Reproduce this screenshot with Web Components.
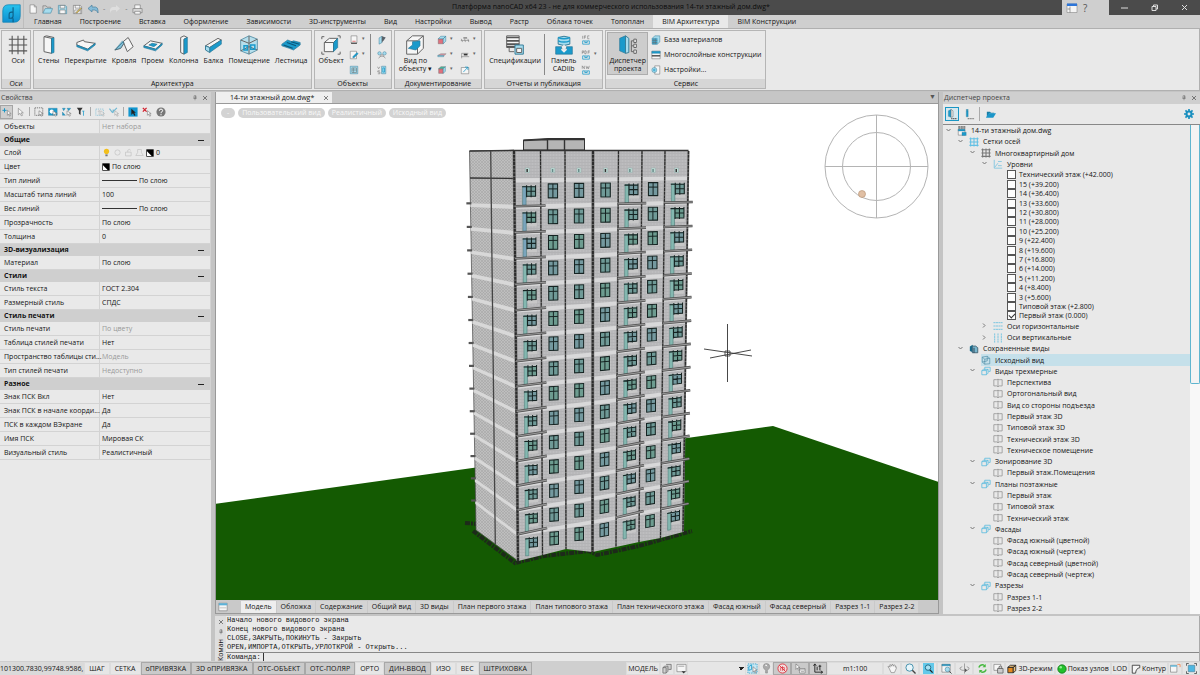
<!DOCTYPE html>
<html lang="ru">
<head>
<meta charset="utf-8">
<title>Платформа nanoCAD</title>
<style>
  html, body { margin: 0; height: 100%; overflow: hidden; }
  body {
    font: 7px/10px "Open Sans", "Noto Sans", sans-serif;
    color: #141414;
    background: #cfcfcf;
    --bar: #cfcfcf;
    --face: #e9e9e9;
    --line: #a9a9a9;
    --blue: #1a96c4;
  }
</style>
</head>
<body>
<cad-app></cad-app>

<script>
const RESET = `
  :host, * { box-sizing: border-box; }
  button, input, select { font: inherit; color: inherit; margin: 0; padding: 0; border: 0; background: none; border-radius: 0; }
  button { cursor: pointer; white-space: nowrap; }
`;

// o = outline, w = white body, b = solid blue, l = light blue, n = blue line only
const ICONS = {
  logo: `<defs><linearGradient id="g" x1="0" y1="0" x2="0" y2="1"><stop offset="0" stop-color="#28c3ee"/><stop offset="1" stop-color="#0f8fd0"/></linearGradient></defs><path d="M8 1H23V15Q23 23 15 23H1V9Q1 1 8 1Z" fill="url(#g)" stroke="#1687b5" stroke-width="1"/><path d="M14 4V15Q14 18 11 18H9V13Q9 10 14 10M14 18V23" fill="none" stroke="#0d5f86" stroke-width="1.4"/>`,
  file: `<path class="w" d="M5 2H15L20 7V22H5Z"/><path class="o" d="M15 2V7H20"/>`,
  open: `<path class="o" d="M2 20V4H9L11 7H19V10"/><path class="l" d="M2 20L7 10H23L19 20Z"/>`,
  save: `<path class="l" d="M3 3H18L21 6V21H3Z"/><path class="w" d="M7 3H17V9H7ZM6 13H18V21H6Z"/>`,
  saveas: `<path class="w" d="M3 3H18L21 6V21H3Z"/><path class="o" d="M7 3V9H17V3M6 21V13H18V21"/><path d="M8 19L19 8L21 10L11 20Z" fill="#e5c24c" stroke="#555"/>`,
  undo: `<path d="M2 11L10 4V8H17Q22 9 22 15V20Q20 14 15 14H10V18Z" fill="#86bcd8" stroke="#447c9c" stroke-width="1.3"/>`,
  redo: `<path d="M22 11L14 4V8H7Q2 9 2 15V20Q4 14 9 14H14V18Z" fill="#dedede"/>`,
  print: `<path class="w" d="M6 2H18V11H6Z"/><path d="M2 10H22V19H2Z" fill="#d9d9d9" stroke="#555"/><path class="w" d="M6 16H18V22H6Z"/>`,
  window: `<path d="M2 4H22V21H2Z" fill="#f4f4f4" stroke="#777"/><path d="M2 3H22V8H2Z" fill="#2c75d8"/><path class="o" d="M8 9V21M3 14H8"/>`,
  axes: `<path d="M5 1V23M12 1V23M19 1V23M1 5H23M1 12H23M1 19H23" fill="none" stroke="#555" stroke-width="1.3"/>`,
  wall: `<path class="w" d="M6 2L15 4V22L6 20Z"/><path class="b" d="M15 4L18 3V21L15 22Z"/><path class="o" d="M6 2L9 1L18 3"/>`,
  slab: `<path class="w" d="M1 9L9 6L10 8L23 10L14 17L1 12Z"/><path class="b" d="M1 12L14 17L23 10V12L14 19L1 14Z"/>`,
  roof: `<path class="w" d="M11 8L17 3L23 14L16 20Z"/><path class="o" d="M11 8L1 18L8 16L12 10"/><path class="b" d="M1 18L10 7L12 9L8 16Z" opacity=".5"/>`,
  opening: `<path class="w" d="M1 13L9 7L23 10L15 17Z"/><path class="b" d="M7 12L11 10L17 11L13 14ZM1 13L15 17L23 10V12L15 19L1 15Z"/>`,
  column: `<path class="w" d="M8 3L12 1L16 3L12 5V23L8 21Z"/><path class="b" d="M12 5L16 3V21L12 23Z"/>`,
  beam: `<path class="w" d="M3 13L18 4L22 6L8 15Z"/><path class="b" d="M8 15L22 6V11L8 21Z"/><path class="l" d="M3 13L8 15V21L3 18Z"/>`,
  room: `<path class="l" d="M2 6L12 1L22 5V18L12 23L2 19Z" opacity=".75"/><path class="o" d="M2 6L12 10L22 5M12 10V23M12 1V10M2 19L12 14L22 18"/><path class="n" d="M6 13H10V18H6ZM14 12H19V17H14Z"/>`,
  stairs: `<path class="b" d="M1 11L8 6L13 8L15 7L23 9V12L15 18L10 16L1 13Z"/><path d="M3 12L14 16M7 9L18 13M12 8L22 11" stroke="#0b5578" stroke-width="1.3"/>`,
  object: `<path class="w" d="M4 9L10 4H20L15 9V20H4Z"/><path class="b" d="M15 9L20 4V15L15 20Z"/><path class="o" d="M4 9H15M1 5V2H4M20 1H23V4M1 20V23H4M20 23H23V20"/>`,
  panelbox: `<path class="w" d="M5 2H19V19H5Z"/><path d="M5 20H19" stroke="#555" stroke-width="3"/><path d="M8 15H16" stroke="#e06060" stroke-width="2"/>`,
  sheetedit: `<path class="w" d="M3 3H18V21H3Z"/><path class="b" d="M10 15L19 6L22 9L13 18L9 19Z"/>`,
  sheets: `<path class="l" d="M3 3H21V21H3Z"/><path class="o" d="M7 7H18V18H7ZM11 7V18M7 12H18"/>`,
  extrude: `<path class="l" d="M5 7L12 3V18L5 22Z"/><path d="M12 3L21 6L16 13L12 17Z" fill="#58616a"/><path class="o" d="M12 3V18"/>`,
  joints: `<circle class="l" cx="6" cy="8" r="4"/><circle class="l" cx="18" cy="8" r="4"/><path class="o" d="M4 20L12 10L20 20M7 15H17"/>`,
  vs: `<path class="l" d="M11 3H21V21H11Z"/><path class="n" d="M14 7H18V17H14Z"/><path class="o" d="M1 4L4 9L7 4M7 14H2V17H7V21H2"/>`,
  viewobj: `<path class="w" d="M2 7L9 1H22V16L15 23H2Z"/><path class="o" d="M2 7H15V23M15 7L22 1"/><path class="b" d="M4 16L9 12V8L18 7V13L13 18Z"/>`,
  redbox: `<path d="M3 9H15V21H3Z" fill="#e0717d" stroke="#666"/><path class="l" d="M3 9L9 3H21L15 9ZM15 9L21 3V15L15 21Z"/>`,
  redflat: `<path d="M2 13L9 9H22L16 14Z" fill="#d995a0" stroke="#777"/><path class="l" d="M2 13H16V16H2Z"/>`,
  redgreen: `<path d="M4 9H15V20H4Z" fill="#e0717d" stroke="#666"/><path d="M4 9L9 4H20L15 9Z" fill="#45b69d" stroke="#666"/><path class="l" d="M15 9L20 4V15L15 20Z"/>`,
  dim1: `<path class="o" d="M2 13H22M3 9L6 17M11 9L13 17M19 9L21 17"/><path d="M8 7H17" stroke="#777" stroke-width="3"/>`,
  dim2: `<path class="o" d="M4 20V8H20M3 16H22"/><path d="M9 11H18" stroke="#333" stroke-width="4"/>`,
  note: `<path class="w" d="M3 6H21V21H3Z"/><path class="n" d="M8 17L19 5M19 5V12M19 5H12"/>`,
  spec: `<path class="w" d="M2 1H17V15H2Z"/><path d="M2 3H17M2 7H17M2 11H17M2 14H17" stroke="#555" stroke-width="2"/><path class="l" d="M12 12H22V23H12Z"/><path class="w" d="M14 16H20V21H14Z"/><path class="o" d="M5 15V20H11"/>`,
  cadlib: `<path class="l" d="M5 3Q12 0 19 3V11Q12 14 5 11Z"/><path class="n" d="M5 3Q12 6 19 3M5 7Q12 10 19 7"/><path class="b" d="M2 14H9V17H15V14H22V23H2Z"/><path d="M12 12V20M9 17L12 20L15 17" stroke="#eee" fill="none" stroke-width="2"/>`,
  ifc: `<path class="n" d="M4 14H9V18H15V14H20V22H4ZM12 12V18"/><path class="o" d="M4 2V9M8 9V2H12M8 5H12M20 2H16V9H20"/>`,
  pdf: `<path class="n" d="M4 14H9V18H15V14H20V22H4ZM12 12V18"/><path class="o" d="M3 9V2H6V6H3M9 2H12L13 5L12 9H9ZM17 9V2H21M17 5H21"/>`,
  nw: `<path class="n" d="M4 14H9V18H15V14H20V22H4ZM12 12V18"/><path class="o" d="M3 9V2L8 9V2M12 2L14 9L16 4L18 9L20 2"/>`,
  manager: `<path class="b" d="M2 4L9 1V22L2 19Z"/><path class="l" d="M9 1L13 4V21L9 22Z"/><path class="o" d="M16 7V20H19M16 13H19M16 7H19"/><path class="w" d="M19 5H22V9H19ZM19 11H22V15H19ZM19 18H22V22H19Z"/>`,
  matbase: `<path class="l" d="M3 8L9 2H21V17L15 22H3Z"/><path class="b" d="M3 8H15V22H3Z" opacity=".7"/><path class="o" d="M7 8V22M11 8V22M3 13H15M3 18H15"/>`,
  layers: `<path class="w" d="M2 3H22V21H2Z"/><path class="b" d="M2 3H22V8H2Z"/><path d="M2 14H22" stroke="#333" stroke-width="3"/>`,
  settings: `<path class="w" d="M9 2H21V22H9Z"/><circle class="l" cx="8" cy="12" r="6"/><circle class="n" cx="8" cy="12" r="2"/>`,
  pin: `<path class="o" d="M8 3H16V13H8ZM5 13H19M12 13V21M14 3V13" style="stroke-width:2"/>`,
  close: `<path d="M4 4L20 20M20 4L4 20" stroke="#444" stroke-width="2.6" fill="none"/>`,
  cursor: `<path class="w" d="M8 3V19L12 15L15 21L18 20L15 14H20Z"/>`,
  pluscursor: `<path d="M6 3V13M1 8H11" stroke="#1a96c4" stroke-width="2.4"/><path class="w" d="M13 8V20L16 17L18 22L20 21L18 16H22Z"/>`,
  selrect: `<path d="M2 2H21V20H2Z" fill="none" stroke="#444" stroke-width="1.6" stroke-dasharray="3 2"/><path class="w" d="M12 9V20L15 17L17 22L20 21L18 16H22Z"/>`,
  selwin: `<path class="b" d="M1 3H22V20H1Z"/><circle cx="9" cy="11" r="5" fill="#fff"/><path class="w" d="M12 9V20L15 17L17 22L20 21L18 16H22Z"/>`,
  selinv: `<path class="b" d="M1 3H8L4 9ZM1 20V12L8 20ZM12 3H21L16 9Z"/><path class="w" d="M12 9V20L15 17L17 22L20 21L18 16H22Z"/>`,
  filter: `<path d="M2 2H16L11 9V19L7 16V9Z" fill="#333"/><path class="n" d="M15 10H20M18 10V21"/>`,
  selfaded: `<g opacity=".45"><path d="M2 5H20V20H2Z" fill="none" stroke="#1a96c4" stroke-width="2" stroke-dasharray="3 2"/><path class="o" d="M10 9V20M7 12L10 8L13 12"/><path class="w" d="M14 9V20L17 17L19 22L22 21L19 16H23Z"/></g>`,
  checkfaded: `<g opacity=".6"><path d="M1 4L8 13L19 2M10 6V14" fill="none" stroke="#1a96c4" stroke-width="2.6"/><path class="w" d="M14 9V20L17 17L19 22L22 21L19 16H23Z"/></g>`,
  selblue: `<path d="M1 1H23V23H1Z" fill="#1296cf"/><path d="M8 4V19L12 15L15 21L18 20L15 14H19Z" fill="#222"/>`,
  xcursor: `<path d="M2 2L11 11M11 2L2 11" stroke="#d21f2c" stroke-width="3"/><path class="w" d="M13 9V20L16 17L18 22L21 21L18 16H22Z"/>`,
  help: `<circle cx="12" cy="12" r="11" fill="#777"/><path d="M8 9Q8 5 12 5Q16 5 16 9Q16 11 12 13V15M12 17V20" stroke="#fff" stroke-width="2.4" fill="none"/>`,
  bulb: `<path d="M12 2Q19 2 19 9Q19 13 15 16H9Q5 13 5 9Q5 2 12 2Z" fill="#f2bf1c"/><path d="M9 17H15V22H9Z" fill="#777"/>`,
  sun: `<circle cx="12" cy="12" r="7" fill="none" stroke="#c4c4c4" stroke-width="2"/>`,
  lock: `<path d="M4 11H19V21H4ZM10 11V6Q14 1 18 6" fill="none" stroke="#c4c4c4" stroke-width="2"/>`,
  printer: `<path d="M7 4H17V12L22 20H2L7 12Z" fill="none" stroke="#c4c4c4" stroke-width="2"/>`,
  swatch: `<path d="M1 1H23V23H1Z" fill="#000"/><path d="M3 7V21H17Z" fill="#fff"/>`,
  projview: `<path class="b" d="M3 4L9 1V18L3 16Z"/><path class="w" d="M9 1L13 4V17L9 18Z"/><path d="M9 21H22" stroke="#666" stroke-width="3" stroke-dasharray="3 1"/>`,
  projinfo: `<path class="b" d="M5 4H9V17H5ZM5 1H9V3H5Z"/><path d="M8 21H22" stroke="#888" stroke-width="3" stroke-dasharray="3 1"/>`,
  folder: `<path d="M4 18V6H11L13 8H20V10H9Z" fill="#1a7ea5"/><path d="M8 9H24L18 19H2Z" fill="#1b96c9"/>`,
  gear: `<circle cx="12" cy="12" r="6" fill="none" stroke="#1a8fbf" stroke-width="5"/><path d="M12 0V5M12 19V24M0 12H5M19 12H24M3.500 3.500L7 7M17 17L20.500 20.500M20.500 3.500L17 7M7 17L3.500 20.500" stroke="#1a8fbf" stroke-width="4"/>`,
  dwg: `<path d="M3 2H21M3 5H21" stroke="#555" stroke-width="2.4" stroke-dasharray="5 1"/><path class="w" d="M3 8H19V22H3Z"/><path class="b" d="M3 8H19V12H3ZM12 15H22V23H12Z"/>`,
  gridblue: `<path d="M4 1V23M12 1V23M20 1V23M1 4H23M1 12H23M1 20H23" fill="none" stroke="#63c0e4" stroke-width="2.6"/>`,
  griddark: `<path d="M4 1V23M12 1V23M20 1V23M1 4H23M1 12H23M1 20H23" fill="none" stroke="#777" stroke-width="2.6"/>`,
  levels: `<path d="M3 2V22H22M4 20L12 10M12 6H21M12 16H21" fill="none" stroke="#7cc4e0" stroke-width="2"/>`,
  hlines: `<path d="M1 4H23M1 12H23M1 20H23" fill="none" stroke="#68bfe0" stroke-width="2" stroke-dasharray="5 1"/>`,
  vlines: `<path d="M4 1V23M12 1V23M20 1V23" fill="none" stroke="#68bfe0" stroke-width="2" stroke-dasharray="5 1"/>`,
  saved: `<path d="M2 6L9 2V20L2 17Z" fill="#156b8c"/><path d="M8 5H16L21 9V21H8Z" fill="#7ab7ce" stroke="#39596a" stroke-width="2"/><path d="M12 9V21" stroke="#234" stroke-width="2"/>`,
  cube: `<path d="M3 5L15 3L21 8V21L9 22L3 17ZM3 5L9 10L21 8M9 10V22M3 17L15 14V3" fill="none" stroke="#4d8ca6" stroke-width="1.6"/>`,
  group: `<path d="M9 3H22V13H18M9 3V9M2 11L6 8H17V17L13 21H2ZM2 11H13V21M13 11L17 8" fill="none" stroke="#5fbddf" stroke-width="2"/>`,
  view: `<path d="M2 4H9L12 3L15 4H22V19H15L12 21L9 19H2ZM12 3V21" fill="none" stroke="#8f8f8f" stroke-width="1.8"/>`,
  tabsheet: `<path class="w" d="M2 3H22V21H2Z"/><path d="M2 3H22V8H2Z" fill="#5bb2d8"/><path d="M4 14H20" stroke="#bbb" stroke-width="2"/>`,
  shapes: `<path d="M9 3H20V14H14M2 10L6 7H13V18L9 22H2ZM2 10H9V22" fill="#d0d0d0" stroke="#666" stroke-width="1.6"/>`,
  sheetdown: `<path class="w" d="M2 3H22V19H2Z"/><path d="M12 18H21L17 23Z" fill="#333"/><path class="o" d="M5 7H18"/>`,
  dynsel: `<path d="M2 2H22V22H2Z" fill="#c5e8f5" stroke="#1a96c4" stroke-width="1.6" stroke-dasharray="3 2"/><path class="n" d="M4 8L10 4V14L4 16Z"/><path class="w" d="M13 8V20L16 17L18 22L20 21L18 16H22Z"/>`,
  lamp: `<path d="M12 1Q19 1 19 8Q19 12 14 16V22H10V16Q5 12 5 8Q5 1 12 1Z" fill="#aaa" stroke="#777"/><path d="M9 5Q12 3 13 7" stroke="#fff" stroke-width="2" fill="none"/>`,
  noanno: `<circle cx="12" cy="12" r="10" fill="#f0dede" stroke="#e0343f" stroke-width="2"/><path d="M5 5L19 19" stroke="#e0343f" stroke-width="2"/><path d="M8 17V10H16V17M12 7V17" stroke="#e0343f" stroke-width="1.6" fill="none"/>`,
  curmenu: `<path class="w" d="M2 2V14L5 11L8 16L10 15L7 10H11Z"/><path class="w" d="M10 12H22V22H10Z"/><path class="o" d="M10 15H22M13 19H20"/>`,
  ucs: `<path d="M4 2V20H21M1 6L4 2L7 6M17 17L21 20L17 23M9 16V8M15 4V16M12 7H18" fill="none" stroke="#222" stroke-width="2"/>`,
  hand: `<path class="w" d="M5 12L2 8Q4 6 7 9L6 4Q8 2 10 7L11 3Q14 2 14 7L16 4Q19 4 18 9L20 8Q22 10 18 17L16 21H9Z"/>`,
  lens: `<circle cx="10" cy="10" r="8" fill="#e8f6fb" stroke="#3d8ca9" stroke-width="2"/><path d="M16 16L23 23" stroke="#444" stroke-width="3"/>`,
  lensblue: `<path d="M0 0H24V24H0Z" fill="#63c9ea"/><circle cx="11" cy="10" r="6" fill="#a7e2f4" stroke="#1c647f" stroke-width="2"/><path d="M15 15L21 21" stroke="#222" stroke-width="3"/>`,
  lenswin: `<path class="w" d="M2 3H20V20H2Z"/><path class="b" d="M2 3H20V6H2Z"/><circle class="l" cx="14" cy="14" r="5"/><path d="M18 18L23 23" stroke="#444" stroke-width="2"/>`,
  orbit: `<path class="o" d="M12 1V23M7 8Q1 10 2 13Q5 17 14 16M17 8Q23 10 22 13Q20 16 17 16"/><path d="M13 12L18 16L13 20Z" fill="#555"/>`,
  regen: `<path d="M4 10Q7 3 14 4L17 6M20 14Q17 21 10 20L7 18" fill="none" stroke="#45b83e" stroke-width="3"/><path d="M19 2V9H12ZM5 22V15H12Z" fill="#45b83e"/>`,
  lockwin: `<path class="w" d="M2 3H17V16H2Z"/><path d="M10 12H22V22H10ZM13 12V8Q16 5 19 8V12" fill="#ccc" stroke="#555" stroke-width="1.6"/>`,
  box3d: `<path d="M2 8H15V21H2Z" fill="#e58a20" stroke="#222" stroke-width="2"/><path d="M2 8L8 3H21L15 8ZM15 8L21 3V16L15 21Z" fill="#ecc27e" stroke="#222" stroke-width="2"/>`,
  green: `<circle cx="12" cy="12" r="10" fill="#22c12c" stroke="#127a18" stroke-width="2"/><circle cx="9" cy="8" r="3" fill="#90f090"/>`,
  contour: `<path d="M3 22V3H21V9Q12 10 11 22Z" fill="#f6f6f6" stroke="#333" stroke-width="2"/>`,
  dual: `<path class="w" d="M1 5H15V20H1Z"/><path d="M1 5H15V8H1Z" fill="#59b7dc"/><path d="M16 3H22V9" fill="none" stroke="#f08b59" stroke-width="2"/>`,
  full: `<path d="M5 5H19V19H5Z" fill="#4eb7e1" stroke="#316a82"/><path d="M1 6V1H6M18 1H23V6M1 18V23H6M18 23H23V18" fill="none" stroke="#333" stroke-width="1.6"/>`
};

class CadIcon extends HTMLElement {
  connectedCallback() {
    const root = this.attachShadow({ mode: 'open' });
    root.innerHTML = `
      <style>
        :host { display: inline-flex; flex: none; width: var(--size, 10px); height: var(--size, 10px); }
        svg { width: 100%; height: 100%; display: block; }
        .o { fill: none; stroke: #666; stroke-width: 1.2; }
        .w { fill: #f6f6f6; stroke: #666; stroke-width: 1.2; }
        .b { fill: #1a9acb; stroke: #2a7797; stroke-width: .8; }
        .l { fill: #a5dcee; stroke: #3a7f9a; stroke-width: 1.2; }
        .n { fill: none; stroke: #1a9acb; stroke-width: 1.8; }
      </style>
      <svg viewBox="0 0 24 24" aria-hidden="true">${ICONS[this.getAttribute('name')] || ''}</svg>`;
  }
}
customElements.define('cad-icon', CadIcon);

const ico = (name, size) => `<cad-icon name="${name}"${size ? ` style="--size:${size}px"` : ''}></cad-icon>`;

/* ---------- header ---------- */

class CadHeader extends HTMLElement {
  connectedCallback() {
    const tabs = ['Главная', 'Построение', 'Вставка', 'Оформление', 'Зависимости', '3D-инструменты', 'Вид', 'Настройки', 'Вывод', 'Растр', 'Облака точек', 'Топоплан', 'BIM Архитектура', 'BIM Конструкции'];
    this.attachShadow({ mode: 'open' }).innerHTML = `
      <style>${RESET}
        :host { display: grid; grid-template-columns: 24px 1fr; background: var(--bar); }
        .logo { display: flex; grid-row: span 2; padding: 4px 2px; border-right: 1px solid #bdbdbd; }
        .title { display: flex; height: 15px; }
        .quick { display: flex; align-items: center; gap: 4px; width: 136px; padding: 3px 4px 0; }
        .quick i { font-style: normal; color: #777; }
        .caption { flex: 1; background: #4b4b4b; color: #0c0c0c; text-align: center; line-height: 14px; }
        .aux { display: flex; align-items: center; gap: 5px; width: 47px; padding: 0 4px; font-size: 10px; color: #555; }
        .win { display: flex; align-items: center; justify-content: space-around; width: 91px; background: #4b4b4b; color: #ddd; }
        .win svg { width: 7px; height: 7px; display: block; fill: none; stroke: #ddd; }
        nav { display: flex; height: 13px; padding-left: 1px; }
        nav button { padding: 0 9px; line-height: 13px; }
        nav .on { background: var(--face); }
      </style>
      <div class="logo">${ico('logo', 19)}</div>
      <div class="title">
        <div class="quick">${ico('file')}${ico('open', 11)}${ico('save', 11)}${ico('saveas', 11)}${ico('undo', 12)}<i>-</i>${ico('redo', 12)}<i>-</i>${ico('print', 11)}</div>
        <div class="caption">Платформа nanoCAD x64 23 - не для коммерческого использования 14-ти этажный дом.dwg*</div>
        <div class="aux">${ico('window', 12)}<span>?</span></div>
        <div class="win">
          <button aria-label="Свернуть"><svg viewBox="0 0 7 7"><path d="M0 4H7"/></svg></button>
          <button aria-label="Восстановить"><svg viewBox="0 0 7 7"><path d="M1 2.500H5V6.500H1ZM2.500 2V1H6.500V5H5"/></svg></button>
          <button aria-label="Закрыть"><svg viewBox="0 0 7 7"><path d="M1 1L6 6M6 1L1 6"/></svg></button>
        </div>
      </div>
      <nav>${tabs.map(t => `<button class="${t === 'BIM Архитектура' ? 'on' : ''}">${t}</button>`).join('')}</nav>`;
  }
}
customElements.define('cad-header', CadHeader);

/* ---------- ribbon ---------- */

class RibbonGroup extends HTMLElement {
  connectedCallback() {
    this.attachShadow({ mode: 'open' }).innerHTML = `
      <style>${RESET}
        :host { display: flex; flex-direction: column; border: 1px solid #b5b5b5; }
        .body { flex: 1; display: flex; align-items: flex-start; padding: 1px 1px 0; }
        .name { background: #d6d6d6; text-align: center; line-height: 9px; white-space: nowrap; }
      </style>
      <div class="body"><slot></slot></div>
      <div class="name">${this.getAttribute('name')}</div>`;
  }
}
customElements.define('ribbon-group', RibbonGroup);

class RibbonButton extends HTMLElement {
  connectedCallback() {
    this.attachShadow({ mode: 'open' }).innerHTML = `
      <style>${RESET}
        :host { display: block; text-align: center; }
        button { display: flex; flex-direction: column; align-items: center; gap: 2px; padding: 3px 2px 0 3px; line-height: 8px; height: 43px; }
        :host([pressed]) button { background: #cdcdcd; border: 1px solid #adadad; padding: 2px 1px 0; }
        :host([small]) button { flex-direction: row; gap: 3px; height: 15px; padding: 0 3px; }
      </style>
      <button>${ico(this.getAttribute('icon'), this.hasAttribute('small') ? 10 : 20)}<span><slot></slot></span></button>`;
  }
}
customElements.define('ribbon-button', RibbonButton);

class CadRibbon extends HTMLElement {
  connectedCallback() {
    const big = (i, t, x = '') => `<ribbon-button icon="${i}" ${x}>${t}</ribbon-button>`;
    const col = (...a) => `<div class="col">${a.map(i => `<button aria-label="${i}">${ico(i)}</button>`).join('')}</div>`;
    const drops = (...a) => `<div class="drops">${a.map(i => `<span>${i ? '▾' : ''}</span>`).join('')}</div>`;
    this.attachShadow({ mode: 'open' }).innerHTML = `
      <style>${RESET}
        :host { display: flex; gap: 2px; height: 63px; padding: 1px 1px; background: var(--face); border: 1px solid #b0b0b0; border-left: 0; }
        .col, .drops { display: flex; flex-direction: column; }
        .col button { display: flex; align-items: center; height: 15px; padding: 0 3px; }
        .drops { width: 7px; color: #666; font-size: 5px; }
        .drops span { height: 15px; line-height: 13px; }
        .sep { align-self: stretch; width: 1px; margin: 2px 3px 4px 1px; background: #888; }
        .text { display: flex; flex-direction: column; }
        .pad { padding: 0 2px; }
      </style>
      <ribbon-group name="Оси" style="width:30px"><div class="pad">${big('axes', 'Оси')}</div></ribbon-group>
      <ribbon-group name="Архитектура">
        ${big('wall', 'Стены')}${big('slab', 'Перекрытие')}${big('roof', 'Кровля')}${big('opening', 'Проем')}${big('column', 'Колонна')}${big('beam', 'Балка')}${big('room', 'Помещение')}${big('stairs', 'Лестница')}
      </ribbon-group>
      <ribbon-group name="Объекты">
        ${big('object', 'Объект')}${col('panelbox', 'sheetedit', 'sheets')}${drops(1, 1, 0)}<div class="sep"></div>${col('extrude', 'joints', 'vs')}
      </ribbon-group>
      <ribbon-group name="Документирование">
        ${big('viewobj', 'Вид по<br>объекту ▾')}${col('redbox', 'redflat', 'redgreen')}${drops(1, 1, 1)}${col('dim1', 'dim2', 'note')}${drops(1, 1, 0)}
      </ribbon-group>
      <ribbon-group name="Отчеты и публикация">
        ${big('spec', 'Спецификации')}<div class="sep"></div>${big('cadlib', 'Панель<br>CADlib')}${col('ifc', 'pdf', 'nw')}${drops(0, 1, 0)}
      </ribbon-group>
      <ribbon-group name="Сервис">
        ${big('manager', 'Диспетчер<br>проекта', 'pressed')}
        <div class="text">${big('matbase', 'База материалов', 'small')}${big('layers', 'Многослойные конструкции', 'small')}${big('settings', 'Настройки...', 'small')}</div>
      </ribbon-group>`;
  }
}
customElements.define('cad-ribbon', CadRibbon);

/* ---------- dock panel frame ---------- */

class DockPanel extends HTMLElement {
  connectedCallback() {
    this.attachShadow({ mode: 'open' }).innerHTML = `
      <style>${RESET}
        :host { display: flex; flex-direction: column; background: var(--face); min-height: 0; }
        header { display: flex; align-items: center; gap: 4px; height: 12px; padding: 0 3px 0 1px; background: var(--bar); color: #444; }
        header span { flex: 1; }
        header button { display: flex; }
      </style>
      <header><span>${this.getAttribute('name')}</span><button aria-label="Закрепить">${ico('pin', 6)}</button><button aria-label="Закрыть">${ico('close', 6)}</button></header>
      <slot></slot>`;
  }
}
customElements.define('dock-panel', DockPanel);

/* ---------- properties ---------- */

class PropertyGrid extends HTMLElement {
  connectedCallback() {
    const line = '<i></i>По слою';
    const rows = [
      ['Объекты', '<em>Нет набора</em>'],
      ['Общие'],
      ['Слой', ico('bulb', 9) + ico('sun', 9) + ico('lock', 9) + ico('printer', 9) + ico('swatch', 8) + '0'],
      ['Цвет', ico('swatch', 8) + 'По слою'],
      ['Тип линий', line],
      ['Масштаб типа линий', '100'],
      ['Вес линий', line],
      ['Прозрачность', 'По слою'],
      ['Толщина', '0'],
      ['3D-визуализация'],
      ['Материал', 'По слою'],
      ['Стили'],
      ['Стиль текста', 'ГОСТ 2.304'],
      ['Размерный стиль', 'СПДС'],
      ['Стиль печати'],
      ['Стиль печати', '<em>По цвету</em>'],
      ['Таблица стилей печати', 'Нет'],
      ['Пространство таблицы сти...', '<em>Модель</em>'],
      ['Тип стилей печати', '<em>Недоступно</em>'],
      ['Разное'],
      ['Знак ПСК Вкл', 'Нет'],
      ['Знак ПСК в начале коорди...', 'Да'],
      ['ПСК в каждом ВЭкране', 'Да'],
      ['Имя ПСК', 'Мировая СК'],
      ['Визуальный стиль', 'Реалистичный']
    ];
    const tools = ['pluscursor', 'cursor', '', 'selrect', 'selwin', 'selinv', 'filter', '', 'selfaded', 'checkfaded', '', 'selblue', 'xcursor', 'help'];
    this.attachShadow({ mode: 'open' }).innerHTML = `
      <style>${RESET}
        :host { display: block; border-right: 1px solid #d3d3d3; }
        .tools { display: flex; align-items: center; height: 16px; border-bottom: 1px solid #c8c8c8; }
        .tools button { display: flex; align-items: center; justify-content: center; width: 14px; height: 14px; }
        .tools button:first-child { background: #cfcfcf; border: 1px solid #a5a5a5; width: 13px; }
        .tools hr { width: 1px; height: 9px; margin: 0 2px; border: 0; background: #aaa; }
        table { width: 100%; border-collapse: separate; border-spacing: 0; table-layout: fixed; }
        td, th { height: 14px; padding: 0 0 0 4px; line-height: 10px; text-align: left; font-weight: normal; white-space: nowrap; border-bottom: 1px solid #d3d3d3; }
        th[scope=row] { border-right: 1px solid #d3d3d3; }
        td { padding-left: 2px; }
        td div { display: flex; align-items: center; gap: 2px; }
        td i { width: 35px; height: 1px; background: #333; }
        tr.sec th { height: 12px; font-weight: bold; background: var(--bar); border: 0; }
        tr.sec div { display: flex; align-items: center; justify-content: space-between; padding-right: 6px; }
        tr.sec b { width: 6px; height: 1px; background: #222; }
        em { font-style: normal; color: #999; }
      </style>
      <div class="tools">${tools.map(t => t ? `<button aria-label="${t}">${ico(t)}</button>` : '<hr>').join('')}</div>
      <table>
        <colgroup><col style="width:100px"><col></colgroup>
        ${rows.map(([k, v]) => v === undefined
          ? `<tr class="sec"><th colspan="2"><div>${k}<b></b></div></th></tr>`
          : `<tr><th scope="row">${k}</th><td><div>${v}</div></td></tr>`).join('')}
      </table>`;
  }
}
customElements.define('property-grid', PropertyGrid);

/* ---------- model view ---------- */

class ModelScene extends HTMLElement {
  connectedCallback() {
    this.attachShadow({ mode: 'open' }).innerHTML = `
      <style>
        :host { display: block; min-height: 0; background: #fff; }
        svg { display: block; width: 100%; height: 100%; }
      </style>
      <svg viewBox="216 104 724 496" preserveAspectRatio="xMidYMid slice" role="img" aria-label="Модель дома">
        <defs>
          <pattern id="brick" width="3" height="3" patternUnits="userSpaceOnUse"><rect width="3" height="3" fill="#bdbdbf"/><path d="M0 .5H3M1 1V3" stroke="#a9a9ab" stroke-width=".5"/></pattern>
          <pattern id="side" width="3" height="3" patternUnits="userSpaceOnUse"><rect width="3" height="3" fill="#bebebe"/><path d="M0 0L3 3M0 3L3 0" stroke="#a3a3a3" stroke-width=".5"/></pattern>
        </defs>
        <path d="M216 504L774 426L940 482V600H216Z" fill="#145a02"/>
        ${this.building()}
        <g fill="none" stroke="#b4b4b4" stroke-width="1">
          <circle cx="877.500" cy="166.500" r="51.500"/><circle cx="877.500" cy="166.500" r="34"/>
          <path d="M877.500 115V218M826 166.500H929"/>
        </g>
        <circle cx="863" cy="194" r="3.500" fill="#e0bfa4" stroke="#b08b6c" stroke-width=".6"/>
        <path d="M728.500 324V382M705 349L753 356M711 358L752 350" stroke="#333" stroke-width=".9" fill="none"/>
        <path d="M726 351H731V356H726Z" stroke="#333" stroke-width=".8" fill="none"/>
      </svg>`;
  }

  building() {
    const top = [515, 541.5, 566, 594, 619.5, 643, 666, 689.5];
    const bot = [519, 543.5, 567, 593.5, 617, 640, 661.5, 684];
    const base = [561, 555, 549, 552, 547, 542, 538, 532];
    // floor height at position t along the front, row k counted from the top
    const fy = (t, k) => 191.5 - 3 * t + (26.4 - 2.2 * t) * k - (0.083 - 0.018 * t) * k * k;
    const ly = k => 191.5 + 23.7 * k - 0.06 * k * k;
    const fx = (c, y) => {
      const i = Math.min(6, Math.floor(c)), f = c - i, v = (y - 150) / 400;
      const a = top[i] + (bot[i] - top[i]) * v, b = top[i + 1] + (bot[i + 1] - top[i + 1]) * v;
      return a + (b - a) * f;
    };
    const F = (c, k) => { const y = fy(c / 7, k); return [fx(c, y), y]; };
    const S = (s, k) => {
      const y0 = ly(k), y1 = fy(0, k), y = y0 + (y1 - y0) * s;
      const v = (y - 150) / 400;
      return [470.5 + 6.5 * v + s * (44.5 - 2.5 * v), y];
    };
    const P = pts => 'M' + pts.map(p => p[0].toFixed(1) + ' ' + p[1].toFixed(1)).join('L');
    let out = '';

    // shadow dashes around the foundation
    out += `<path d="M466 523L480 524M474 531L516 563L545 556L590 551L598 555L640 546L693 531" fill="none" stroke="#1d2a1a" stroke-width="4" stroke-dasharray="5 1 2 1"/>`;
    // roof box and the two faces
    out += `<path d="M524.500 150V140L549 138.500H585.500V150Z" fill="#b5b5b5" stroke="#333"/><path d="M524 140.500L549 139.500H586M548.500 139V150M565.500 140V150" stroke="#333" fill="none" stroke-width="1.4"/>`;
    out += `<path d="M470.500 151L515 150L519 561L477 530Z" fill="url(#side)" stroke="#444" stroke-width=".7"/>`;
    out += `<path d="M515 150.500H689.500L684 532 L661.500 538L640 542L617 547L593.500 552L567 549L543.500 555L519 561Z" fill="url(#brick)"/>`;

    for (let k = 0; k < 15; k++) {
      const a = k - 0.5, b = k - 0.34;
      out += `<path d="${P([F(0, a), F(3.3, a), F(7, a), F(7, b), F(3, b), F(0, b)])}Z" fill="#d8d8d9"/>`;
      if (k) {
        out += `<path d="${P([S(0, a), S(1, a), S(1, b), S(0, b)])}Z" fill="#d8d8d8"/>`;
        const p = S(0, a);
        out += `<path d="M${p[0] - 4} ${p[1]}H${p[0] + 1}" stroke="#555" stroke-width="2.2"/>`;
      }
    }
    out += `<path d="M470.500 151L515 150.500H689.500M471 178L515 178.500" stroke="#333" stroke-width="1.3" fill="none"/>`;
    out += `<path d="M491.700 151L496.300 544" stroke="#444" stroke-width="1.3"/>`;

    // pilasters between the bays
    top.forEach((x, i) => {
      const w = i === 0 || i === 3 ? 3 : i === 7 ? 2 : 1.6;
      out += `<path d="M${x} 151L${bot[i]} ${base[i]}" stroke="#7a7a7a" stroke-width="${w}"/><path d="M${x} 151L${bot[i]} ${base[i]}" stroke="#2c2c2c" stroke-width="${w * 0.7}" stroke-dasharray="3 .7"/>`;
    });
    // attic vents
    for (let c = 0; c < 7; c++) {
      const x = fx(c + 0.5, 170);
      out += `<path d="M${x - 2} 168H${x + 2}V172.500H${x - 2}Z" fill="#c2ded6" stroke="#8aa" stroke-width=".4"/><path d="M${x - 1} 169H${x + .5}V172H${x - 1}Z" fill="${c % 3 ? '#688' : '#333'}"/>`;
    }

    for (let k = 0; k < 15; k++) {
      const s = 1 - k * 0.006;
      for (let c = 0; c < 7; c++) {
        const [x, y] = F(c + 0.5, k);
        const sk = c < 3 ? -0.006 * k : -0.012 * k;
        const glass = ['#6f9a97', '#74999f', '#6d9c90'][(k * 2 + c * c) % 3];
        let w;
        if (c === 0 || c === 4 || c === 6) {
          w = `<path d="M-5.500 -6H9V9H-5.500Z" fill="#c7c7c7"/>
            <path d="M-5 -5H-1.500V14H-5Z" fill="${k < 3 && c === 0 ? '#7aa5bd' : '#84b8b0'}" stroke="#4d7a78" stroke-width=".6"/>
            <path d="M-1 -5H8V5H-1Z" fill="${glass}"/>
            <path d="M-5.500 -4.500H8.500M-1 0H8.500M-1 5H8.500M-1 -6V6M3.500 -6V6M8 -6V5" fill="none" stroke="#152322" stroke-width="1.1"/>`;
        } else {
          const h = c === 5 ? 6.5 : 7;
          w = `<path d="M-5.700 ${-h - 1}H5.700V${h + 1}H-5.700Z" fill="#cdcdcd"/>
            <path d="M-4.700 ${-h}H4.700V${h}H-4.700Z" fill="${glass}" stroke="#152322" stroke-width="1.1"/>
            <path d="M0 ${-h}V${h}M-4.700 -2H4.700" stroke="#152322" stroke-width="1" fill="none"/>`;
        }
        out += `<g transform="matrix(${s} ${sk} 0 ${s} ${x.toFixed(1)} ${y.toFixed(1)})">${w}</g>`;
      }
    }
    // balcony slabs
    for (let k = 0; k < 14; k++) {
      [[0, 1.2], [4, 5.2], [6, 7.2]].forEach(([a, b]) => {
        const p = F(a, k + 0.56), q = F(Math.min(b, 7), k + 0.56 - 0.004 * k);
        if (b > 7) q[0] += 5;
        out += `<path d="${P([p, q])}" stroke="#4c4c4c" stroke-width="2.6"/><path d="${P([p, q])}" stroke="#989898" stroke-width="1.1"/>`;
      });
    }
    return out;
  }
}
customElements.define('model-scene', ModelScene);

class DocumentView extends HTMLElement {
  connectedCallback() {
    const sheets = ['Модель', 'Обложка', 'Содержание', 'Общий вид', '3D виды', 'План первого этажа', 'План типового этажа', 'План технического этажа', 'Фасад южный', 'Фасад северный', 'Разрез 1-1', 'Разрез 2-2'];
    this.attachShadow({ mode: 'open' }).innerHTML = `
      <style>${RESET}
        :host { display: flex; flex-direction: column; min-width: 0; min-height: 0; border: 1px solid #999; border-top: 0; }
        .docs { display: flex; justify-content: space-between; height: 12px; background: #c6c6c6; border-bottom: 1px solid #999; }
        .docs .tab { display: flex; align-items: center; gap: 9px; background: #efefef; padding: 0 3px 0 14px; }
        .docs .tab button { display: flex; }
        .docs > span { color: #555; padding-right: 2px; }
        .canvas { position: relative; flex: 1; min-height: 0; display: grid; }
        .pills { position: absolute; left: 5px; top: 4px; display: flex; gap: 3px; }
        .pills button { background: #d3d3d3; color: #f8f8f8; border-radius: 5px; padding: 0 4px; line-height: 10px; }
        .pills .menu { padding: 0 6px; }
        .sheets { display: flex; align-items: center; gap: 1px; height: 13px; background: #c9c9c9; padding-left: 2px; }
        .sheets cad-icon { margin-right: 12px; }
        .sheets button { background: #d4d4d4; padding: 0 4px; line-height: 12px; }
        .sheets .on { background: #eee; }
      </style>
      <div class="docs"><div class="tab">14-ти этажный дом.dwg*<button aria-label="Закрыть">${ico('close', 6)}</button></div><span>▼</span></div>
      <div class="canvas">
        <model-scene></model-scene>
        <div class="pills"><button class="menu">-</button><button>Пользовательский вид</button><button>Реалистичный</button><button>Исходный вид</button></div>
      </div>
      <div class="sheets">${ico('tabsheet')}${sheets.map((s, i) => `<button class="${i ? '' : 'on'}">${s}</button>`).join('')}</div>`;
  }
}
customElements.define('document-view', DocumentView);

/* ---------- project tree ---------- */

class TreeItem extends HTMLElement {
  connectedCallback() {
    const level = +this.getAttribute('level');
    const arrow = this.getAttribute('arrow');
    const icon = this.getAttribute('icon');
    const check = this.hasAttribute('check');
    this.attachShadow({ mode: 'open' }).innerHTML = `
      <style>${RESET}
        :host { display: flex; align-items: center; flex: 6 1 0; min-height: 0; padding-left: ${2 + level * 12}px; white-space: nowrap; }
        :host([check]) { flex-grow: 5; }
        .arrow { width: 8px; height: 8px; margin-right: 4px; flex: none; fill: none; stroke: #777; }
        .name { display: flex; align-items: center; gap: 4px; line-height: 9px; }
        label { display: flex; align-items: center; gap: 3px; line-height: 9px; padding-left: 2px; }
        input { appearance: none; width: 9px; height: 9px; background: #fdfdfd; border: 1px solid #555; display: grid; }
        input:checked::before { content: ""; width: 5px; height: 3px; margin: 1px; border: solid #333; border-width: 0 0 1px 1px; transform: rotate(-45deg); }
        .bg { flex: 1; display: flex; align-items: center; align-self: stretch; }
        :host([selected]) .bg { background: #c5e0ea; }
      </style>
      <svg class="arrow" viewBox="0 0 8 8">${arrow === 'open' ? '<path d="M1.500 2L3.500 4L5.500 2"/>' : arrow === 'shut' ? '<path d="M2 1.500L4 3.500L2 5.500"/>' : ''}</svg>
      <div class="bg">${check
        ? `<label><input type="checkbox" ${this.hasAttribute('on') ? 'checked' : ''}><span><slot></slot></span></label>`
        : `<div class="name">${ico(icon)}<span><slot></slot></span></div>`}</div>`;
  }
}
customElements.define('tree-item', TreeItem);

class ProjectTree extends HTMLElement {
  connectedCallback() {
    const node = (l, icon, t, arrow = 'open', x = '') => `<tree-item level="${l}" icon="${icon}" arrow="${arrow}" ${x}>${t}</tree-item>`;
    const leaf = t => node(3, 'view', t, '');
    const floors = ['Технический этаж (+42.000)', '15 (+39.200)', '14 (+36.400)', '13 (+33.600)', '12 (+30.800)', '11 (+28.000)', '10 (+25.200)', '9 (+22.400)', '8 (+19.600)', '7 (+16.800)', '6 (+14.000)', '5 (+11.200)', '4 (+8.400)', '3 (+5.600)', 'Типовой этаж (+2.800)', 'Первый этаж (0.000)'];
    this.attachShadow({ mode: 'open' }).innerHTML = `
      <style>${RESET}
        :host { display: flex; flex-direction: column; flex: 1; min-height: 0; }
        .tools { display: flex; align-items: center; gap: 3px; height: 21px; padding: 0 4px 0 2px; border-bottom: 1px solid #888; }
        .tools button { display: flex; align-items: center; justify-content: center; width: 14px; height: 14px; }
        .tools .on { border: 1px solid var(--blue); background: #d5e8ef; }
        .tools hr { width: 1px; height: 14px; margin: 0; border: 0; background: #aaa; }
        .tools .end { margin-left: auto; }
        .wrap { flex: 1; min-height: 0; display: grid; grid-template-columns: 1fr 10px; }
        .list { display: flex; flex-direction: column; min-height: 0; }
        .scroll { background: #f8f8f8; }
        .scroll div { height: 53%; background: #f3f3f3; border: 1px solid #5fb5cf; border-top: 0; border-radius: 0 0 2px 2px; }
      </style>
      <div class="tools"><button class="on" aria-label="Проект">${ico('projview', 11)}</button><button aria-label="Сведения">${ico('projinfo', 11)}</button><hr><button aria-label="Открыть">${ico('folder', 11)}</button><button class="end" aria-label="Настройки">${ico('gear', 10)}</button></div>
      <div class="wrap">
        <div class="list">
          ${node(0, 'dwg', '14-ти этажный дом.dwg')}
          ${node(1, 'gridblue', 'Сетки осей')}
          ${node(2, 'griddark', 'Многоквартирный дом')}
          ${node(3, 'levels', 'Уровни')}
          ${floors.map((f, i) => node(4, '', f, '', 'check' + (i === 15 ? ' on' : ''))).join('')}
          ${node(3, 'hlines', 'Оси горизонтальные', 'shut')}
          ${node(3, 'vlines', 'Оси вертикальные', 'shut')}
          ${node(1, 'saved', 'Сохраненные виды')}
          ${node(2, 'cube', 'Исходный вид', '', 'selected')}
          ${node(2, 'group', 'Виды трехмерные')}
          ${['Перспектива', 'Ортогональный вид', 'Вид со стороны подъезда', 'Первый этаж 3D', 'Типовой этаж 3D', 'Технический этаж 3D', 'Техническое помещение'].map(leaf).join('')}
          ${node(2, 'group', 'Зонирование 3D')}
          ${leaf('Первый этаж.Помещения')}
          ${node(2, 'group', 'Планы поэтажные')}
          ${['Первый этаж', 'Типовой этаж', 'Технический этаж'].map(leaf).join('')}
          ${node(2, 'group', 'Фасады')}
          ${['Фасад южный (цветной)', 'Фасад южный (чертеж)', 'Фасад северный (цветной)', 'Фасад северный (чертеж)'].map(leaf).join('')}
          ${node(2, 'group', 'Разрезы')}
          ${['Разрез 1-1', 'Разрез 2-2'].map(leaf).join('')}
        </div>
        <div class="scroll"><div></div></div>
      </div>`;
  }
}
customElements.define('project-tree', ProjectTree);

/* ---------- command line ---------- */

class CommandLine extends HTMLElement {
  connectedCallback() {
    this.attachShadow({ mode: 'open' }).innerHTML = `
      <style>${RESET}
        :host { display: grid; grid-template-columns: 11px 1fr; background: var(--face); border-right: 1px solid #aaa; }
        .side { display: flex; flex-direction: column; align-items: center; justify-content: space-between; padding-top: 3px; background: #dedede; }
        .side button { display: flex; }
        .side span { writing-mode: vertical-rl; transform: rotate(180deg); line-height: 10px; }
        .main { display: flex; flex-direction: column; justify-content: flex-end; font: 7px/9px "Liberation Mono", monospace; }
        .log { padding-left: 1px; }
        label { display: flex; align-items: center; height: 9px; padding-left: 1px; border-top: 1px solid #888; }
        input { flex: 1; height: 8px; margin-left: 2px; border-left: 1px solid #333; outline: 0; }
      </style>
      <div class="side"><button aria-label="Закрыть">${ico('close', 6)}</button><button aria-label="Закрепить">${ico('pin', 6)}</button><span>Коман</span></div>
      <div class="main">
        <div class="log"><div>Начало нового видового экрана</div><div>Конец нового видового экрана</div><div>CLOSE,ЗАКРЫТЬ,ПОКИНУТЬ - Закрыть</div><div>OPEN,ИМПОРТА,ОТКРЫТЬ,УРЛОТКРОЙ - Открыть...</div></div>
        <label>Команда:<input type="text"></label>
      </div>`;
  }
}
customElements.define('command-line', CommandLine);

/* ---------- status bar ---------- */

class StatusBar extends HTMLElement {
  connectedCallback() {
    const modes = [['ШАГ'], ['СЕТКА'], ['оПРИВЯЗКА', 1], ['3D оПРИВЯЗКА', 1], ['ОТС-ОБЪЕКТ', 1], ['ОТС-ПОЛЯР', 1], ['ОРТО'], ['ДИН-ВВОД', 1], ['ИЗО'], ['ВЕС'], ['ШТРИХОВКА', 1]];
    const b = (i, cls = '') => `<button class="i ${cls}" aria-label="${i}">${ico(i, 11)}</button>`;
    this.attachShadow({ mode: 'open' }).innerHTML = `
      <style>${RESET}
        :host { display: flex; justify-content: space-between; height: 14px; padding-top: 1px; background: var(--bar); }
        div { display: flex; }
        output { padding-right: 1px; background: #dadada; line-height: 13px; white-space: nowrap; }
        button { display: flex; align-items: center; gap: 1px; padding: 0 4px; background: #e6e6e6; border: 1px solid #dcdcdc; line-height: 11px; }
        .on { background: #cacaca; border-color: #a8a8a8; }
        .i { width: 18px; justify-content: center; padding: 0; }
        .n { width: 14px; }
        .t { padding: 0 1px; }
        .scale { padding: 0 15px; }
        select {
          appearance: none; width: 57px; background-color: #e6e6e6;
          background-image: linear-gradient(45deg, transparent 50%, #222 50%), linear-gradient(135deg, #222 50%, transparent 50%);
          background-size: 3px 3px; background-position: right 4px center, right 1px center; background-repeat: no-repeat;
        }
      </style>
      <div><output>101300.7830,99748.9586,</output>${modes.map(([t, on]) => `<button class="${on ? 'on' : ''}">${t}</button>`).join('')}</div>
      <div>
        <button class="t">МОДЕЛЬ</button>${b('shapes', 'n')}${b('sheetdown', 'n')}
        <select aria-label="Аннотации"><option></option></select>
        ${b('dynsel', 'n')}${b('lamp', 'n')}${b('noanno', 'on')}${b('curmenu', 'on')}${b('ucs', 'on')}
        <button class="scale">m1:100</button>
        ${b('hand')}${b('lens')}${b('lensblue')}${b('lenswin')}${b('orbit')}${b('regen')}${b('lockwin', 'n')}
        <button class="t">${ico('box3d')}3D-режим</button><button class="t">${ico('green')}Показ узлов</button><button class="t">LOD</button><button class="t">${ico('contour')}Контур</button>
        ${b('dual', 'n')}${b('full')}
      </div>`;
  }
}
customElements.define('status-bar', StatusBar);

class CadApp extends HTMLElement {
  connectedCallback() {
    this.attachShadow({ mode: 'open' }).innerHTML = `
      <style>
        :host { display: flex; flex-direction: column; height: 100vh; }
        main {
          flex: 1; min-height: 0; display: grid;
          grid-template: 1fr 45px / 211px 1fr 257px;
          gap: 2px 4px; padding-top: 1px; background: #c4c4c4;
        }
        .left { grid-row: span 2; }
        command-line { grid-column: 2 / 4; }
      </style>
      <cad-header></cad-header>
      <cad-ribbon></cad-ribbon>
      <main>
        <dock-panel class="left" name="Свойства"><property-grid></property-grid></dock-panel>
        <document-view></document-view>
        <dock-panel class="right" name="Диспетчер проекта"><project-tree></project-tree></dock-panel>
        <command-line></command-line>
      </main>
      <status-bar></status-bar>`;
  }
}
customElements.define('cad-app', CadApp);
</script>
</body>
</html>
